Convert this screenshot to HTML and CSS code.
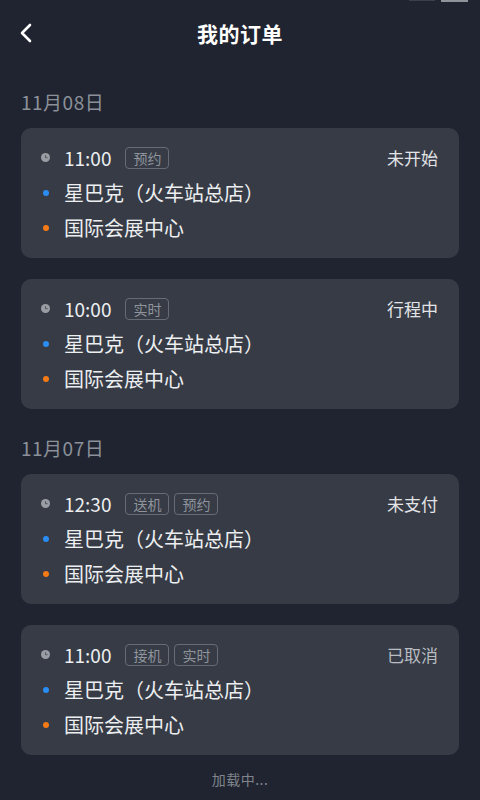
FILE: index.html
```html
<!DOCTYPE html>
<html lang="zh-CN">
<head>
<meta charset="utf-8">
<title>我的订单</title>
<link rel="stylesheet" href="styles.css">
</head>
<body>
<div class="statusbar"><span class="sb-dots"></span><span class="sb-bar"></span></div>
<header class="header">
  <button class="back" aria-label="返回">
    <svg width="14" height="20" viewBox="0 0 14 20"><path d="M11 2 L3 10 L11 18" fill="none" stroke="#ffffff" stroke-width="2.6" stroke-linecap="round" stroke-linejoin="round"/></svg>
  </button>
  <h1 class="title">我的订单</h1>
</header>

<main class="list">
  <section class="group first">
    <div class="date">11月08日</div>
    <div class="card">
      <div class="row">
        <span class="ico"><svg width="9" height="9" viewBox="0 0 9 9"><circle cx="4.5" cy="4.5" r="4.5" fill="#9a9da3"/><path d="M4.5 2.2 V4.7 H6.6" fill="none" stroke="#4a4e57" stroke-width="0.9"/></svg></span>
        <span class="time">11:00</span>
        <span class="tags"><span class="tag">预约</span></span>
        <span class="status">未开始</span>
      </div>
      <div class="row"><span class="ico"><i class="dot blue"></i></span><span class="place">星巴克（火车站总店）</span></div>
      <div class="row"><span class="ico"><i class="dot orange"></i></span><span class="place">国际会展中心</span></div>
    </div>
    <div class="card">
      <div class="row">
        <span class="ico"><svg width="9" height="9" viewBox="0 0 9 9"><circle cx="4.5" cy="4.5" r="4.5" fill="#9a9da3"/><path d="M4.5 2.2 V4.7 H6.6" fill="none" stroke="#4a4e57" stroke-width="0.9"/></svg></span>
        <span class="time">10:00</span>
        <span class="tags"><span class="tag">实时</span></span>
        <span class="status">行程中</span>
      </div>
      <div class="row"><span class="ico"><i class="dot blue"></i></span><span class="place">星巴克（火车站总店）</span></div>
      <div class="row"><span class="ico"><i class="dot orange"></i></span><span class="place">国际会展中心</span></div>
    </div>
  </section>

  <section class="group">
    <div class="date">11月07日</div>
    <div class="card">
      <div class="row">
        <span class="ico"><svg width="9" height="9" viewBox="0 0 9 9"><circle cx="4.5" cy="4.5" r="4.5" fill="#9a9da3"/><path d="M4.5 2.2 V4.7 H6.6" fill="none" stroke="#4a4e57" stroke-width="0.9"/></svg></span>
        <span class="time">12:30</span>
        <span class="tags"><span class="tag">送机</span><span class="tag">预约</span></span>
        <span class="status">未支付</span>
      </div>
      <div class="row"><span class="ico"><i class="dot blue"></i></span><span class="place">星巴克（火车站总店）</span></div>
      <div class="row"><span class="ico"><i class="dot orange"></i></span><span class="place">国际会展中心</span></div>
    </div>
    <div class="card">
      <div class="row">
        <span class="ico"><svg width="9" height="9" viewBox="0 0 9 9"><circle cx="4.5" cy="4.5" r="4.5" fill="#9a9da3"/><path d="M4.5 2.2 V4.7 H6.6" fill="none" stroke="#4a4e57" stroke-width="0.9"/></svg></span>
        <span class="time">11:00</span>
        <span class="tags"><span class="tag">接机</span><span class="tag">实时</span></span>
        <span class="status muted">已取消</span>
      </div>
      <div class="row"><span class="ico"><i class="dot blue"></i></span><span class="place">星巴克（火车站总店）</span></div>
      <div class="row"><span class="ico"><i class="dot orange"></i></span><span class="place">国际会展中心</span></div>
    </div>
  </section>

  <div class="loading">加载中...</div>
</main>
</body>
</html>
```

FILE: styles.css
```css
* { box-sizing: border-box; }
html, body { margin: 0; padding: 0; }
body {
  background: #1f2430;
  width: 480px;
  height: 800px;
  overflow: hidden;
  font-family: "Noto Sans CJK SC", "Noto Sans", sans-serif;
  color: #e6e7e9;
  position: relative;
}
.statusbar {
  position: absolute;
  top: 0;
  right: 12px;
  display: flex;
  gap: 6px;
  align-items: flex-start;
}
.sb-dots { width: 26px; height: 1px; background: #3a3f4a; }
.sb-bar { width: 27px; height: 2px; background: #8f939a; }

.header {
  height: 70px;
  display: flex;
  align-items: center;
  justify-content: center;
  position: relative;
}
.back {
  position: absolute;
  left: 19px;
  top: 23px;
  padding: 0;
  margin: 0;
  border: 0;
  background: none;
  width: 14px;
  height: 20px;
  display: flex;
}
.title {
  margin: 0 0 4px;
  font-size: 21px;
  font-weight: 700;
  color: #ffffff;
  letter-spacing: 0.5px;
  line-height: 30px;
}

.list { padding: 0 21px; }
.group { padding-top: 27px; }
.group.first { padding-top: 20px; }
.date {
  font-size: 19px;
  line-height: 24px;
  height: 24px;
  color: #8b9099;
  margin-bottom: 14px;
  letter-spacing: 0.5px;
}
.card {
  background: #363b46;
  border-radius: 10px;
  height: 130px;
  padding: 12px 21px 13px 20px;
  display: flex;
  flex-direction: column;
}
.card + .card { margin-top: 21px; }
.row {
  height: 35px;
  display: flex;
  align-items: center;
}
.ico {
  width: 9px;
  flex: none;
  margin-right: 14px;
  display: flex;
  align-items: center;
  justify-content: center;
}
.ico svg { display: block; }
.dot {
  width: 6px;
  height: 6px;
  border-radius: 50%;
  display: block;
}
.dot.blue { background: #2b8cf3; }
.dot.orange { background: #f47a16; }
.time {
  font-size: 19px;
  color: #eceef0;
  line-height: 28px;
  margin-right: 14px;
}
.tags { display: flex; gap: 5px; }
.tag {
  height: 22px;
  padding: 0 7px;
  border: 1px solid #666b75;
  border-radius: 4px;
  font-size: 14px;
  line-height: 20px;
  color: #8f949c;
}
.status {
  margin-left: auto;
  font-size: 17px;
  color: #e3e4e6;
  line-height: 24px;
}
.status.muted { color: #b9bcc1; }
.place {
  font-size: 20px;
  color: #eceef0;
  line-height: 28px;
}
.loading {
  text-align: center;
  font-size: 14px;
  line-height: 20px;
  color: #80858d;
  padding-top: 14px;
  letter-spacing: 0.5px;
}
```
